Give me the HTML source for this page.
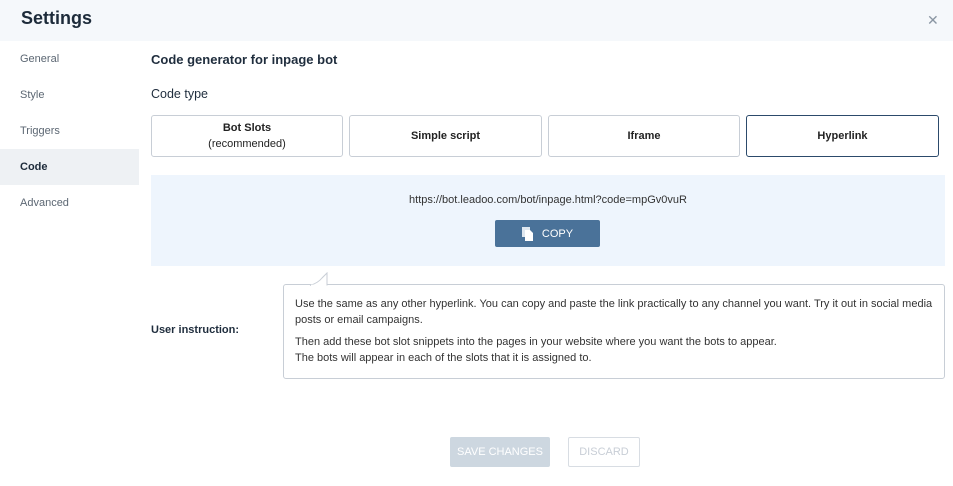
<!DOCTYPE html>
<html><head><style>
*{box-sizing:border-box;margin:0;padding:0}
body{width:953px;height:486px;background:#fff;font-family:"Liberation Sans",sans-serif;color:#1f2d3d;position:relative;overflow:hidden}
.hdr{position:absolute;left:0;top:0;width:953px;height:41px;background:#f5f8fb}
.hdr h1{position:absolute;left:21px;top:8px;font-size:18px;font-weight:bold;color:#1d2b3a}
.x{position:absolute;left:927px;top:12px;font-size:14px;color:#8a96a3}
.nav{position:absolute;left:20px;font-size:11px;color:#5c6773}
.act{position:absolute;left:0;top:149px;width:139px;height:36px;background:#eef1f4}
.t{position:absolute;font-size:13px}
.b{position:absolute;top:115px;height:42px;border:1px solid #c8ced6;border-radius:3px;font-size:11px;font-weight:bold;text-align:center;display:flex;flex-direction:column;justify-content:center;line-height:16px;color:#222}
.sel{border-color:#2c4a6b}
.code{position:absolute;left:151px;top:175px;width:794px;height:91px;background:#eef5fd}
.url{position:absolute;left:0;width:794px;top:19px;text-align:center;font-size:11px;color:#333}
.copy{position:absolute;left:344px;top:45px;width:105px;height:27px;background:#4a7299;border-radius:2px;color:#fff;font-size:11px;display:flex;align-items:center;justify-content:center;gap:8px}
.ins{position:absolute;left:283px;top:284px;width:662px;height:95px;border:1px solid #c8ced6;border-radius:3px;padding:11px 11px;font-size:11px;line-height:16px;color:#333}
.btn{position:absolute;top:437px;height:30px;font-size:11px;display:flex;align-items:center;justify-content:center;border-radius:2px}
</style></head><body>
<div class="hdr"><h1>Settings</h1><div class="x">✕</div></div>
<div class="act"></div>
<div class="nav" style="top:53px">General</div>
<div class="nav" style="top:89px">Style</div>
<div class="nav" style="top:125px">Triggers</div>
<div class="nav" style="top:161px;color:#1d2b3a;font-weight:bold">Code</div>
<div class="nav" style="top:197px">Advanced</div>
<div class="t" style="left:151px;top:52px;font-weight:bold;font-size:13px">Code generator for inpage bot</div>
<div class="t" style="left:151px;top:87px;font-size:12.5px">Code type</div>
<div class="b" style="left:151px;width:192px"><div>Bot Slots</div><div style="font-weight:normal">(recommended)</div></div>
<div class="b" style="left:349px;width:193px">Simple script</div>
<div class="b" style="left:548px;width:192px">Iframe</div>
<div class="b sel" style="left:746px;width:193px">Hyperlink</div>
<div class="code"><div class="url">https://bot.leadoo.com/bot/inpage.html?code=mpGv0vuR</div>
<div class="copy"><svg width="12" height="14" viewBox="0 0 12 14"><rect x="0" y="0" width="8" height="10" fill="#dfe7ef"/><path d="M3 3h5l3 3v8H3z" fill="#fff"/></svg>COPY</div></div>
<div class="t" style="left:151px;top:324px;font-size:11px;font-weight:bold">User instruction:</div>
<div class="ins">Use the same as any other hyperlink. You can copy and paste the link practically to any channel you want. Try it out in social media posts or email campaigns.<div style="margin-top:6px">Then add these bot slot snippets into the pages in your website where you want the bots to appear.<br>The bots will appear in each of the slots that it is assigned to.</div></div>
<svg style="position:absolute;left:308px;top:272px" width="24" height="14"><path d="M2 13.5Q10 11 14 6L19 1V13.5" fill="#fff" stroke="#c8ced6"/><rect x="3" y="12.6" width="15.5" height="2" fill="#fff"/></svg>
<div class="btn" style="left:450px;width:100px;background:#cdd7e0;color:#fff">SAVE CHANGES</div>
<div class="btn" style="left:568px;width:72px;border:1px solid #d8dde3;color:#c8ced6">DISCARD</div>
</body></html>
